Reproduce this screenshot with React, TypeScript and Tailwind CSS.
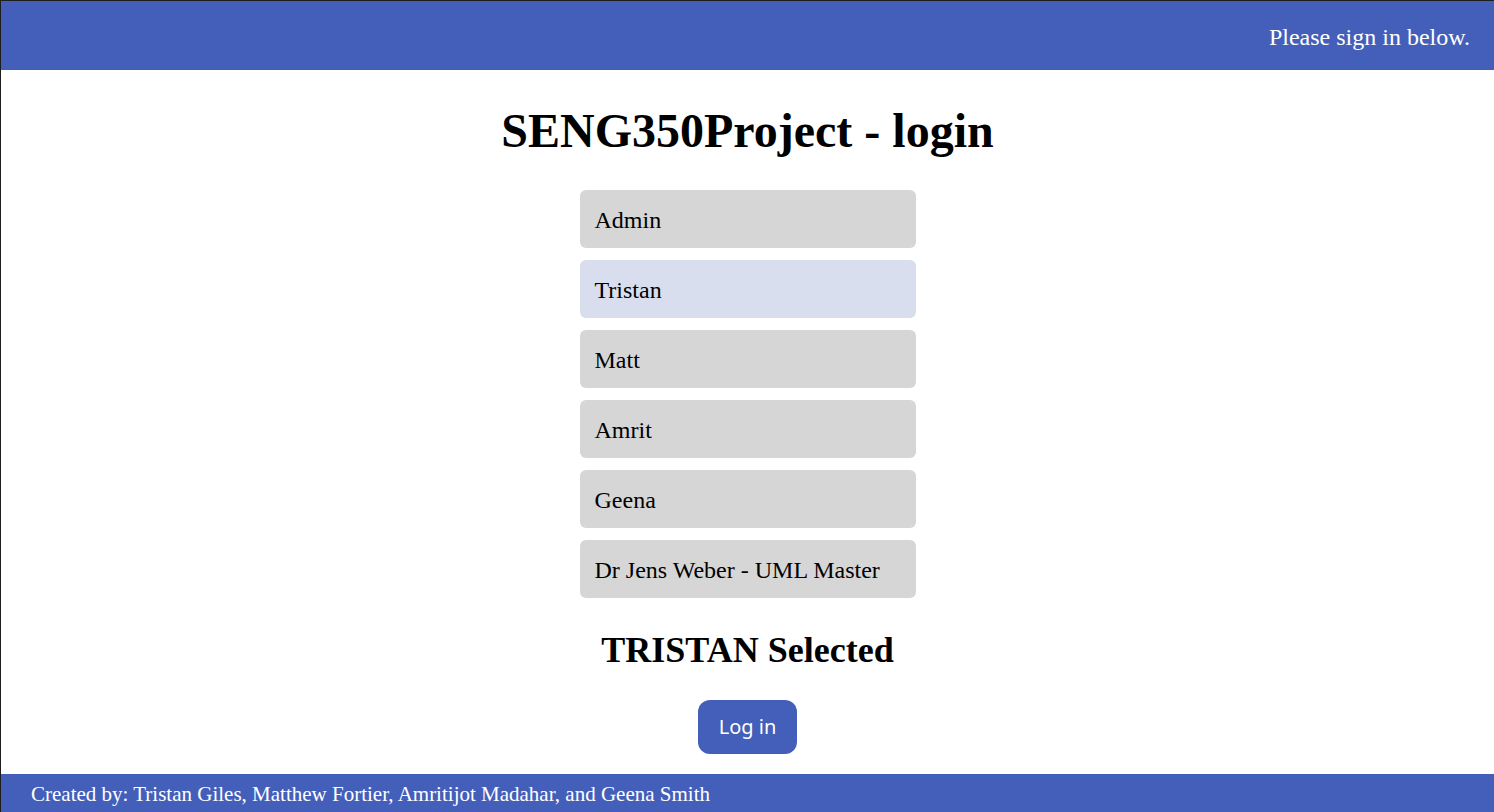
import React, { useState } from 'react';

const users = ['Admin', 'Tristan', 'Matt', 'Amrit', 'Geena', 'Dr Jens Weber - UML Master'];

const serif = { fontFamily: '"Liberation Serif", "Times New Roman", serif' };

export default function App() {
  const [selected, setSelected] = useState('Tristan');

  return (
    <div
      className="h-screen flex flex-col border-l border-t border-[#1e1e1e] bg-white text-black"
      style={serif}
    >
      <header className="h-[69px] shrink-0 bg-[#445fb9] flex items-center justify-end pr-[24px] pt-[2px]">
        <span className="text-[24px] text-white">Please sign in below.</span>
      </header>

      <main className="flex-1 flex flex-col items-center pt-[33px]">
        <h1 className="text-[48px] leading-[56px] font-bold">SENG350Project - login</h1>

        <div className="mt-[31px] flex flex-col gap-[12px] w-[336px]">
          {users.map((u) => (
            <button
              key={u}
              onClick={() => setSelected(u)}
              className={`h-[58px] rounded-[6px] px-[15px] pt-[1px] text-left text-[24px] ${
                selected === u ? 'bg-[#d9deef]' : 'bg-[#d6d6d6]'
              }`}
            >
              {u}
            </button>
          ))}
        </div>

        <h2 className="mt-[32px] text-[36px] leading-[40px] font-bold">
          {selected.toUpperCase()} Selected
        </h2>

        <button
          className="mt-[30px] h-[54px] w-[99px] rounded-[12px] bg-[#445fb9] text-white text-[20px]"
          style={{ fontFamily: '"Noto Sans", "DejaVu Sans", sans-serif' }}
        >
          Log in
        </button>
      </main>

      <footer className="h-[38px] shrink-0 bg-[#445fb9] flex items-center pl-[30px] pt-[3px]">
        <span className="text-[21px] text-white">
          Created by: Tristan Giles, Matthew Fortier, Amritijot Madahar, and Geena Smith
        </span>
      </footer>
    </div>
  );
}
